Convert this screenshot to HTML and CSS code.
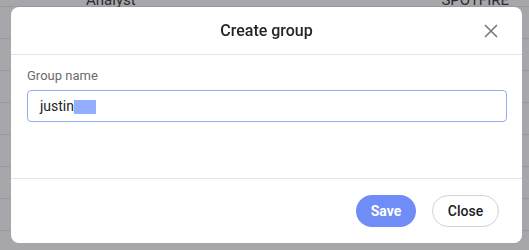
FILE: index.html
```html
<!DOCTYPE html>
<html lang="en">

<head>
    <meta charset="UTF-8">
    <meta name="viewport" content="width=device-width, initial-scale=1.0">
    <title>Create group</title>
    <link rel="stylesheet" href="styles.css">
</head>

<body>
    <div class="page">
        <div class="table-row">
            <span class="cell">Analyst</span>
            <span class="cell">SPOTFIRE</span>
        </div>
        <div class="row-line"></div>
        <div class="row-line"></div>
        <div class="row-line"></div>
        <div class="row-line"></div>
        <div class="row-line"></div>
        <div class="row-line"></div>
        <div class="row-line"></div>
    </div>
    <div class="backdrop"></div>
    <div class="modal">
        <div class="modal-header">
            <h1 class="modal-title">Create group</h1>
            <button class="btn-x" type="button">
                <svg width="14" height="14" viewBox="0 0 14 14">
                    <path d="M1 1L13 13M13 1L1 13" stroke="#77777c" stroke-width="1.6" fill="none" />
                </svg>
            </button>
        </div>
        <div class="modal-body">
            <label for="groupName" class="label">Group name</label>
            <div class="input"><span>justin</span><span class="sel"></span></div>
        </div>
        <div class="modal-footer">
            <button class="btn btn-save" type="button">Save</button>
            <button class="btn btn-close" type="button">Close</button>
        </div>
    </div>
</body>

</html>
```

FILE: styles.css
```css
* {
    margin: 0;
    padding: 0;
    box-sizing: border-box;
}

body {
    font-family: Roboto, "Liberation Sans", sans-serif;
    width: 529px;
    height: 250px;
    overflow: hidden;
    background: #fff;
}

.page {
    height: 250px;
}

.table-row {
    display: flex;
    justify-content: space-between;
    padding: 0 20px 0 86px;
    height: 16px;
    margin-top: -9px;
    border-bottom: 1px solid #e6e6e8;
    font-size: 15px;
    color: #222;
}

.row-line {
    height: 32px;
    border-bottom: 1px solid #e6e6e8;
}

.backdrop {
    position: fixed;
    inset: 0;
    background: rgba(60, 58, 66, 0.45);
}

.modal {
    position: fixed;
    left: 11px;
    top: 7px;
    width: 511px;
    height: 236px;
    background: #fff;
    border-radius: 8px;
    display: flex;
    flex-direction: column;
}

.modal-header {
    height: 48px;
    border-bottom: 1px solid #e3e3e6;
    display: flex;
    align-items: center;
    justify-content: center;
    position: relative;
}

.modal-title {
    font-size: 16px;
    font-weight: 500;
    color: #212529;
    margin-top: -1px;
}

.btn-x {
    position: absolute;
    right: 24px;
    top: 17px;
    border: none;
    background: none;
    display: flex;
}

.modal-body {
    flex: 1;
    padding: 13px 15px 0 16px;
    border-bottom: 1px solid #e3e3e6;
}

.label {
    display: block;
    font-size: 13px;
    color: #6b6b70;
    line-height: 16px;
    margin-bottom: 6px;
}

.input {
    height: 32px;
    border: 1px solid #93aaf5;
    border-radius: 4px;
    display: flex;
    align-items: center;
    padding-left: 12px;
    font-size: 14px;
    color: #222;
}

.sel {
    display: inline-block;
    width: 22px;
    height: 14px;
    background: #93adff;
    margin-top: 1px;
}

.modal-footer {
    height: 64px;
    display: flex;
    justify-content: flex-end;
    align-items: center;
    gap: 16px;
    padding: 0 23px 0 0;
}

.btn {
    height: 32px;
    border-radius: 16px;
    font-family: Roboto, "Liberation Sans", sans-serif;
    font-size: 14px;
    cursor: pointer;
}

.btn-save {
    width: 60px;
    border: none;
    background: #6f8cf7;
    color: #fff;
    font-weight: 700;
}

.btn-close {
    width: 67px;
    border: 1px solid #d2d2dc;
    background: #fff;
    color: #222;
    font-weight: 500;
}
```
